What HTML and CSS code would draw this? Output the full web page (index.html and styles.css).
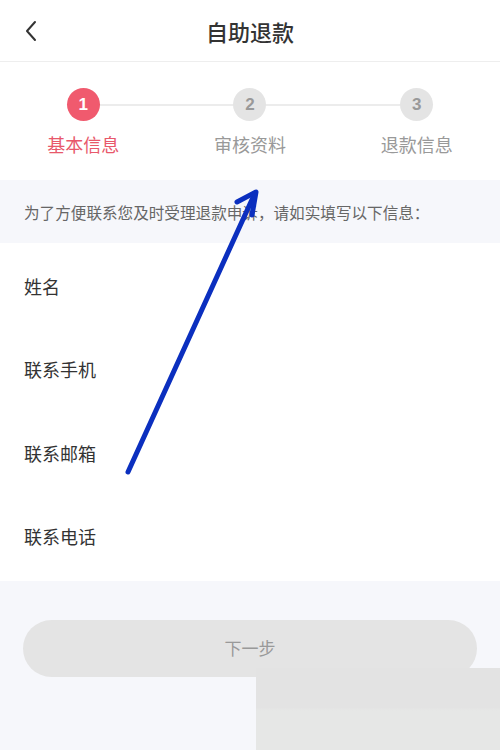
FILE: index.html
```html
<!DOCTYPE html>
<html lang="zh-CN">
<head>
    <meta charset="UTF-8">
    <meta name="viewport" content="width=device-width, initial-scale=1.0">
    <title>自助退款</title>
    <link rel="stylesheet" href="styles.css">
</head>
<body>
    <!-- 顶部导航 -->
    <div class="header">
        <span class="back">
            <svg width="14" height="22" viewBox="0 0 14 22"><path d="M11 2 L3 11 L11 20" fill="none" stroke="#333" stroke-width="2" stroke-linecap="round" stroke-linejoin="round"/></svg>
        </span>
        <h1 class="title">自助退款</h1>
    </div>

    <!-- 步骤条 -->
    <div class="steps">
        <div class="step active">
            <span class="dot">1</span>
            <span class="label">基本信息</span>
        </div>
        <div class="step">
            <span class="dot">2</span>
            <span class="label">审核资料</span>
        </div>
        <div class="step">
            <span class="dot">3</span>
            <span class="label">退款信息</span>
        </div>
    </div>

    <div class="notice">为了方便联系您及时受理退款申诉，请如实填写以下信息：</div>

    <!-- 表单 -->
    <div class="form">
        <div class="row">姓名</div>
        <div class="row">联系手机</div>
        <div class="row">联系邮箱</div>
        <div class="row">联系电话</div>
    </div>

    <div class="footer">
        <button class="next">下一步</button>
    </div>

    <div class="cover"></div>

    <!-- 标注箭头 -->
    <svg class="arrow" width="500" height="750" viewBox="0 0 500 750">
        <g fill="none" stroke="#0b2fbf" stroke-width="5" stroke-linecap="round" stroke-linejoin="round">
            <path d="M128 472 L255 193"/>
            <path d="M237 202 L256 192 L252 215"/>
        </g>
    </svg>
</body>
</html>
```

FILE: styles.css
```css
body {
    margin: 0;
    padding: 0;
    width: 500px;
    height: 750px;
    overflow: hidden;
    background: #f6f7fb;
    font-family: "Noto Sans CJK SC", "Noto Sans", sans-serif;
    position: relative;
}
.header {
    height: 61px;
    background: #fff;
    border-bottom: 1px solid #eeeeee;
    display: flex;
    align-items: center;
    justify-content: center;
    position: relative;
}
.back {
    position: absolute;
    left: 24px;
    top: 20px;
    display: flex;
}
.title {
    margin: 0;
    font-size: 22px;
    font-weight: 500;
    color: #333;
}
.steps {
    height: 118px;
    background: #fff;
    display: grid;
    grid-template-columns: repeat(3, 1fr);
    box-sizing: border-box;
    padding-top: 26px;
    position: relative;
}
.step {
    display: flex;
    flex-direction: column;
    align-items: center;
    position: relative;
}
/* 连接线 */
.step + .step::before {
    content: '';
    position: absolute;
    top: 16px;
    right: 50%;
    width: 100%;
    height: 2px;
    background: #ececec;
}
.dot {
    width: 33px;
    height: 33px;
    border-radius: 50%;
    background: #e4e4e4;
    color: #999;
    font-family: "Liberation Sans", Arial, sans-serif;
    font-weight: bold;
    font-size: 17px;
    display: flex;
    align-items: center;
    justify-content: center;
    position: relative;
    z-index: 1;
}
.label {
    margin-top: 10px;
    font-size: 18px;
    color: #999;
}
.step.active .dot {
    background: #f05a6e;
    color: #fff;
}
.step.active .label {
    color: #e8586b;
}
.notice {
    height: 63px;
    display: flex;
    align-items: center;
    padding-left: 24px;
    font-size: 15.6px;
    color: #666;
}
.form {
    background: #fff;
    padding: 1px 0 3px;
}
.row {
    height: 83.5px;
    display: flex;
    align-items: center;
    padding-left: 24px;
    font-size: 18px;
    color: #333;
}
.footer {
    padding: 39px 23px 0;
}
.next {
    width: 100%;
    height: 57px;
    border: none;
    border-radius: 29px;
    background: #e4e4e4;
    color: #999;
    font-family: inherit;
    font-size: 17px;
    padding-bottom: 3px;
}
.cover {
    position: absolute;
    left: 256px;
    top: 668px;
    width: 244px;
    height: 82px;
    background: linear-gradient(#e3e3e3 0%, #e3e3e3 48%, #e6e7e6 52%, #e6e7e6 100%);
}
.arrow {
    position: absolute;
    left: 0;
    top: 0;
    pointer-events: none;
}
```
